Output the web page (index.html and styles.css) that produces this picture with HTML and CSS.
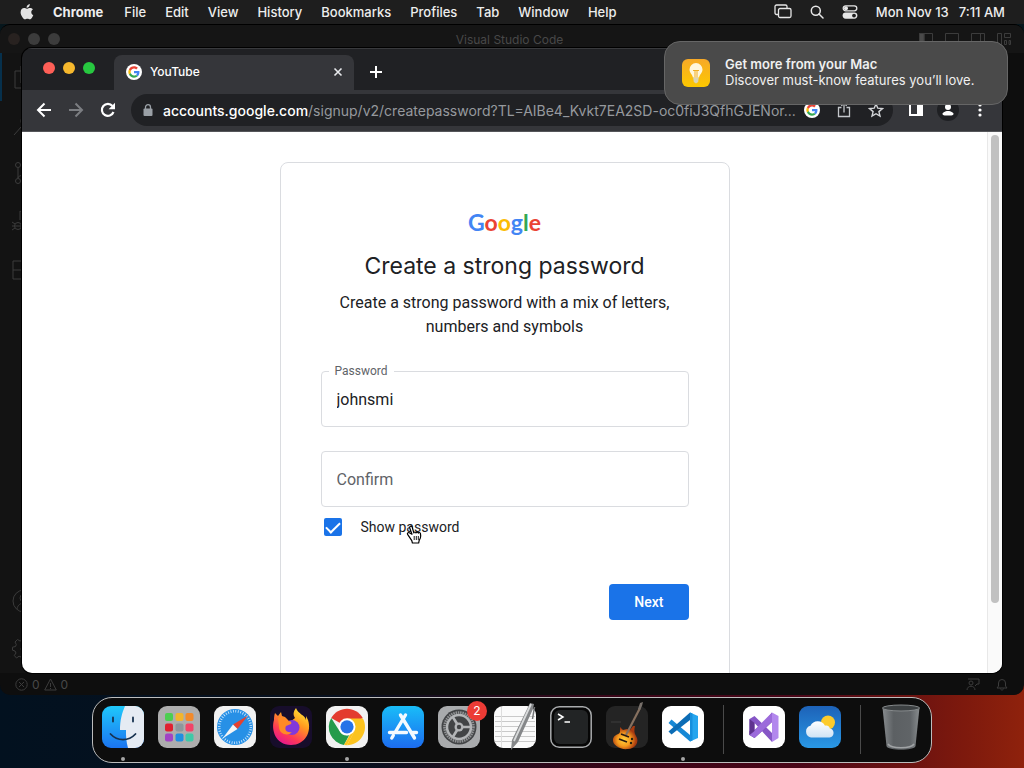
FILE: index.html
```html
<!DOCTYPE html>
<html lang="en">
<head>
    <meta charset="UTF-8">
    <meta name="viewport" content="width=device-width, initial-scale=1.0">
    <title>Create a strong password</title>
    <link rel="stylesheet" href="styles.css">
</head>
<body>
    <!-- Shared icons -->
    <svg class="sprite" width="0" height="0" aria-hidden="true">
        <symbol id="google-g" viewBox="0 0 48 48">
            <circle cx="24" cy="24" r="24" fill="#fff"/>
            <g transform="translate(7 7) scale(.71)">
                <path fill="#EA4335" d="M24 9.5c3.54 0 6.71 1.22 9.21 3.6l6.85-6.85C35.9 2.38 30.47 0 24 0 14.62 0 6.51 5.38 2.56 13.22l7.98 6.19C12.43 13.72 17.74 9.5 24 9.5z"/>
                <path fill="#4285F4" d="M46.98 24.55c0-1.57-.15-3.09-.38-4.55H24v9.02h12.94c-.58 2.96-2.26 5.48-4.78 7.18l7.73 6c4.51-4.18 7.09-10.36 7.09-17.65z"/>
                <path fill="#FBBC05" d="M10.53 28.59c-.48-1.45-.76-2.99-.76-4.59s.27-3.14.76-4.59l-7.98-6.19C.92 16.46 0 20.12 0 24c0 3.88.92 7.54 2.56 10.78l7.97-6.19z"/>
                <path fill="#34A853" d="M24 48c6.48 0 11.93-2.13 15.89-5.81l-7.73-6c-2.15 1.45-4.92 2.3-8.16 2.3-6.26 0-11.57-4.22-13.47-9.91l-7.98 6.19C6.51 42.62 14.62 48 24 48z"/>
            </g>
        </symbol>
    </svg>

    <div class="desktop">
        <header class="menubar">
            <svg class="apple" width="14" height="16" viewBox="0 0 14 16"><path d="M9.8 0c.1 1.100-.3 2-.9 2.700-.6.7-1.400 1.200-2.300 1.100-.1-1 .4-1.900.9-2.500C8.100.6 9 .1 9.800 0zM12.900 5.400c-1.100.7-1.700 1.600-1.600 2.800 0 1.400.8 2.400 2 2.900-.3.9-.7 1.700-1.200 2.400-.7 1-1.300 1.800-2.300 1.800-.9 0-1.300-.6-2.400-.6s-1.500.6-2.400.6c-1 0-1.700-.9-2.400-1.900C1.200 11.500.6 9.900.6 8.300c0-2.700 1.700-4.200 3.500-4.200 1.100 0 1.900.7 2.700.7.700 0 1.700-.8 3-.8 1.200 0 2.400.5 3.100 1.400z"/></svg>
            <nav class="menus">
                <button class="menu app-name">Chrome</button>
                <button class="menu">File</button>
                <button class="menu">Edit</button>
                <button class="menu">View</button>
                <button class="menu">History</button>
                <button class="menu">Bookmarks</button>
                <button class="menu">Profiles</button>
                <button class="menu">Tab</button>
                <button class="menu">Window</button>
                <button class="menu">Help</button>
            </nav>
            <div class="menu-extras">
                <svg width="18" height="15" viewBox="0 0 18 15" fill="none" stroke="#e6e6e6" stroke-width="1.300"><path d="M4 10.500H2.500A1.500 1.500 0 0 1 1 9V2.500A1.500 1.500 0 0 1 2.500 1h9A1.500 1.500 0 0 1 13 2.500V4"/><rect x="4.500" y="4.500" width="12.500" height="9" rx="1.500"/></svg>
                <svg width="14" height="14" viewBox="0 0 14 14" fill="none" stroke="#e6e6e6" stroke-width="1.500"><circle cx="5.800" cy="5.800" r="4.500"/><path d="M9 9l4 4" stroke-linecap="round"/></svg>
                <svg width="16" height="14" viewBox="0 0 16 14"><rect x="1.200" y=".8" width="13.600" height="5" rx="2.500" fill="none" stroke="#e6e6e6" stroke-width="1.300"/><circle cx="4" cy="3.300" r="2" fill="#e6e6e6"/><rect x=".6" y="7.500" width="14.800" height="6.200" rx="3.100" fill="#e6e6e6"/><circle cx="12" cy="10.600" r="1.900" fill="#1e1e1e"/></svg>
                <span class="clock"><span>Mon Nov 13</span><span>7:11 AM</span></span>
            </div>
        </header>

        <!-- Visual Studio Code, in the background -->
        <section class="code-window">
            <div class="code-titlebar">
                <div class="code-lights"><i></i><i></i><i></i></div>
                <span>Visual Studio Code</span>
                <div class="code-layout">
                    <svg width="14" height="12" viewBox="0 0 14 12"><path d="M.5.5h13v11H.5zM5 .5v11"/><path fill="#4a4a4a" d="M.5.5H5v11H.5z"/></svg>
                    <svg width="14" height="12" viewBox="0 0 14 12"><path d="M.5.5h13v11H.5zM.5 8.500h13"/></svg>
                    <svg width="14" height="12" viewBox="0 0 14 12"><path d="M.5.5h13v11H.5zM9.500.5v11"/></svg>
                    <svg width="14" height="12" viewBox="0 0 14 12"><path d="M.5.5h4v11h-4zM7.500.5h6v4h-6zM7.500 7.500h2v4h-2zM12 7.500h1.500v4H12z"/></svg>
                </div>
            </div>
            <div class="activity-bar">
                <span class="active"><svg width="24" height="24" viewBox="0 0 24 24"><path d="M8 6V1h9l5 5v12H8V6H2v17h14v-5"/></svg></span>
                <span><svg width="24" height="24" viewBox="0 0 24 24"><circle cx="15" cy="8" r="6"/><path d="M10 13l-8 9"/></svg></span>
                <span><svg width="24" height="24" viewBox="0 0 24 24"><circle cx="6" cy="4" r="2.500"/><circle cx="6" cy="20" r="2.500"/><circle cx="18" cy="8" r="2.500"/><path d="M6 7v10M18 11c0 4-12 2-12 6"/></svg></span>
                <span><svg width="24" height="24" viewBox="0 0 24 24"><circle cx="6" cy="17" r="3.500"/><path d="M0 13l3 2M0 17h2.500M0 21l3-2M12 13l-3 2M12 21l-3-2M3 17h6M8 2l12 8-7 5M8 2v9"/></svg></span>
                <span><svg width="24" height="24" viewBox="0 0 24 24"><path d="M1 4h9v9h9v9H1zM1 13h9v9M14 2h8v8h-8z"/></svg></span>
                <span class="push"><svg width="24" height="24" viewBox="0 0 24 24"><circle cx="12" cy="12" r="11"/><circle cx="12" cy="9" r="4"/><path d="M5 20c1-8 13-8 14 0"/></svg></span>
                <span><svg width="24" height="24" viewBox="0 0 24 24"><circle cx="12" cy="12" r="3"/><path d="M10 1h4l.5 3 2.500 1 2.500-1.500 2 2.500L20 9l.8 2 2.200 1v2l-3 1-1 2 1.500 3-2.500 1.500-2.500-1.500-2 1-.5 2h-3l-.8-3-2.200-.8L4.500 21 2.300 18.500 4 16l-1-2-2.500-.8v-3L3.500 9.500l.8-2L3 5l2.500-2.500L8 4l1.500-.5z"/></svg></span>
            </div>
            <div class="status-bar">
                <svg width="13" height="13" viewBox="0 0 13 13"><circle cx="6.500" cy="6.500" r="5.700"/><path d="M4 4l5 5M9 4L4 9"/></svg>
                <span>0</span>
                <svg width="13" height="13" viewBox="0 0 13 13"><path d="M6.500 1L12.300 12H.7zM6.500 5v4M6.500 10v1"/></svg>
                <span>0</span>
                <svg class="push-right" width="14" height="13" viewBox="0 0 14 13"><circle cx="5" cy="5" r="2"/><path d="M1 12c0-5 8-5 8 0M2 1h11v5h-2L9 8"/></svg>
                <svg width="12" height="13" viewBox="0 0 12 13"><path d="M1 10h10L9.500 8V5a3.500 3.500 0 0 0-7 0v3zM4.500 10.500c0 2 3 2 3 0"/></svg>
            </div>
        </section>

        <!-- Chrome window -->
        <section class="browser">
            <div class="tab-strip">
                <div class="lights"><i class="red"></i><i class="yellow"></i><i class="green"></i></div>
                <div class="tab">
                    <svg width="16" height="16"><use href="#google-g"/></svg>
                    <span class="tab-title">YouTube</span>
                    <button class="icon-plain" aria-label="Close tab"><svg width="10" height="10" viewBox="0 0 10 10" stroke="#e8eaed" stroke-width="1.600"><path d="M1.500 1.500l7 7M8.500 1.500l-7 7"/></svg></button>
                </div>
                <button class="icon-plain new-tab" aria-label="New tab"><svg width="12" height="12" viewBox="0 0 12 12" stroke="#fff" stroke-width="2"><path d="M6 0v12M0 6h12"/></svg></button>
            </div>
            <div class="toolbar">
                <button class="tool" aria-label="Back"><svg width="16" height="16" viewBox="0 0 16 16" fill="none" stroke="#fff" stroke-width="2"><path d="M15 8H2M8.500 1.500L2 8l6.500 6.500"/></svg></button>
                <button class="tool" aria-label="Forward"><svg width="16" height="16" viewBox="0 0 16 16" fill="none" stroke="#7c7e82" stroke-width="2"><path d="M1 8h13M7.500 1.500L14 8l-6.500 6.500"/></svg></button>
                <button class="tool" aria-label="Reload"><svg width="16" height="16" viewBox="0 0 16 16"><path d="M13.500 10A6 6 0 1 1 12.500 4" fill="none" stroke="#fff" stroke-width="2.200"/><path d="M15 .8v6.400H8.600z" fill="#fff"/></svg></button>
                <div class="omnibox">
                    <svg class="lock" width="10" height="13" viewBox="0 0 10 13"><rect x=".5" y="4.500" width="9" height="7.500" rx="1" fill="#9aa0a6"/><path d="M2.500 5V3.200a2.500 2.500 0 0 1 5 0V5" fill="none" stroke="#9aa0a6" stroke-width="1.300"/></svg>
                    <div class="url" role="textbox" aria-label="Address" contenteditable="true" spellcheck="false"><b>accounts.google.com</b>/signup/v2/createpassword?TL=AIBe4_Kvkt7EA2SD-oc0fiJ3QfhGJENor...</div>
                    <button class="tool" aria-label="Search with Google"><svg width="16" height="16"><use href="#google-g"/></svg></button>
                    <button class="tool" aria-label="Share"><svg width="14" height="16" viewBox="0 0 14 16" fill="none" stroke="#c4c7cb" stroke-width="1.300"><path d="M4.500 5.500h-3v9h11v-9h-3M7 10.500v-9M4.300 3.800L7 1.200l2.700 2.600"/></svg></button>
                    <button class="tool" aria-label="Bookmark"><svg width="16" height="16" viewBox="0 0 16 16" fill="none" stroke="#d5d7da" stroke-width="1.400"><path d="M8 2l1.800 4.200 4.600.4-3.500 3 1.100 4.500L8 11.700l-4 2.400 1.100-4.500-3.500-3 4.600-.4z"/></svg></button>
                </div>
                <button class="tool" aria-label="Side panel"><svg width="14" height="14" viewBox="0 0 14 14"><path fill="#fff" fill-rule="evenodd" d="M0 0h14v13H0zM2 2v9h6V2z"/></svg></button>
                <button class="tool profile" aria-label="Profile"><svg width="14" height="14" viewBox="0 0 14 14" fill="#fff"><circle cx="7" cy="4" r="3"/><path d="M1 12.500c0-6 12-6 12 0z"/></svg></button>
                <button class="tool" aria-label="Menu"><svg width="4" height="16" viewBox="0 0 4 16" fill="#fff"><circle cx="2" cy="3" r="1.600"/><circle cx="2" cy="8" r="1.600"/><circle cx="2" cy="13" r="1.600"/></svg></button>
            </div>
            <div class="viewport">
                <main class="page">
                    <form class="card">
                        <div class="google-logo" aria-label="Google"><span class="b">G</span><span class="r">o</span><span class="y">o</span><span class="b">g</span><span class="g">l</span><span class="r">e</span></div>
                        <h1>Create a strong password</h1>
                        <p class="lead">Create a strong password with a mix of letters, numbers and symbols</p>
                        <div class="field filled">
                            <input type="text" id="password" value="johnsmi">
                            <label for="password">Password</label>
                        </div>
                        <div class="field">
                            <input type="text" id="confirm" placeholder="Confirm" aria-label="Confirm">
                        </div>
                        <div class="show-row">
                            <input type="checkbox" id="show" checked>
                            <label for="show">Show password
                                <svg class="pointer" width="16" height="19" viewBox="0 0 16 19"><path d="M5 1.200c-1 0-1.600.9-1.200 2L6 9.300 3.300 7.700c-1.200-.6-2.400.6-1.700 1.700l4.200 6.200.6 2.400h6.300l.4-2.400c1.500-2 1.700-3 1.600-4.700l-.3-2.500c-.2-1.100-1.800-1.200-2-.2-.2-1.400-2.200-1.500-2.400-.2-.3-1.300-2-1.300-2.200-.1L6.200 2.200C6 1.500 5.600 1.200 5 1.200z" fill="#fff" stroke="#000" stroke-width="1.200" stroke-linejoin="round"/><path d="M8.200 11v4M10.300 11v4M12.300 11v4" stroke="#000" stroke-width=".9"/></svg>
                            </label>
                        </div>
                        <div class="actions"><button type="button" class="next">Next</button></div>
                    </form>
                </main>
                <div class="scrollbar"><div class="thumb"></div></div>
            </div>
        </section>

        <!-- Notification -->
        <aside class="notification">
            <svg width="28" height="28" viewBox="0 0 28 28">
                <defs><linearGradient id="tip" x2="0" y2="1"><stop stop-color="#f7a928"/><stop offset="1" stop-color="#fcc800"/></linearGradient></defs>
                <rect width="28" height="28" rx="6" fill="url(#tip)"/>
                <path d="M14 4a6.500 6.500 0 0 0-6.500 6.500c0 3.600 3 4.800 3.400 8h6.200c.4-3.200 3.400-4.400 3.400-8A6.500 6.500 0 0 0 14 4z" fill="#fff6dc"/>
                <path d="M11 11.500h6M13 12v6M15 12v6" stroke="#f2ae24" fill="none"/>
                <path d="M11.200 18.500h5.600l-.6 4.500-2.200 1.500-2.200-1.500z" fill="#d9d4b8"/>
            </svg>
            <div class="notification-text">
                <strong>Get more from your Mac</strong>
                <span>Discover must-know features you’ll love.</span>
            </div>
        </aside>

        <footer class="dock">
            <!-- Finder -->
            <div class="app running">
                <svg viewBox="0 0 42 42">
                    <defs><linearGradient id="finder" x2="0" y2="1"><stop stop-color="#1fc8fb"/><stop offset="1" stop-color="#1b74f0"/></linearGradient><clipPath id="tile"><rect width="42" height="42" rx="9"/></clipPath></defs>
                    <g clip-path="url(#tile)"><rect width="42" height="42" fill="url(#finder)"/><path d="M23 0c-3 7-5 14-5 24h6c-.2 6 .3 12 2 18h16V0z" fill="#e5ebf3"/></g>
                    <path d="M11 11.500v4M31 11.500v4" stroke="#17324f" stroke-width="1.800" stroke-linecap="round"/><path d="M8.500 28c7 7.500 18 7.500 25 0" fill="none" stroke="#17324f" stroke-width="1.800" stroke-linecap="round"/>
                </svg>
            </div>
            <!-- Launchpad -->
            <div class="app">
                <svg viewBox="0 0 42 42"><rect width="42" height="42" rx="9" fill="#adadad"/>
                    <rect x="7" y="7" width="8" height="8" rx="2" fill="#4cce50"/><rect x="17.500" y="7" width="8" height="8" rx="2" fill="#f3b52d"/><rect x="27.500" y="7" width="8" height="8" rx="2" fill="#f28a2b"/>
                    <rect x="7" y="17.500" width="8" height="8" rx="2" fill="#e0202f"/><rect x="17.500" y="17.500" width="8" height="8" rx="2" fill="#8e969c"/><rect x="27.500" y="17.500" width="8" height="8" rx="2" fill="#f24468"/>
                    <rect x="7" y="27.500" width="8" height="8" rx="2" fill="#a143c4"/><rect x="17.500" y="27.500" width="8" height="8" rx="2" fill="#1f8fe0"/><rect x="27.500" y="27.500" width="8" height="8" rx="2" fill="#3fc9a7"/>
                </svg>
            </div>
            <!-- Safari -->
            <div class="app">
                <svg viewBox="0 0 42 42"><rect width="42" height="42" rx="9" fill="#f1f1f1"/><circle cx="21" cy="21" r="18" fill="#2790e6"/><circle cx="21" cy="21" r="15.800" fill="none" stroke="#d6ecff" stroke-width="2.600" stroke-dasharray=".8 1.680"/>
                    <path d="M34 9.500L19 18.500l4.500 4.500z" fill="#e5402f"/><path d="M19 18.500L8.500 32.500l15-9.500z" fill="#f5f5f5"/></svg>
            </div>
            <!-- Firefox -->
            <div class="app">
                <svg viewBox="0 0 42 42">
                    <defs><linearGradient id="fox" x1=".9" y1="0" x2=".3" y2="1"><stop stop-color="#fff03a"/><stop offset=".4" stop-color="#ff9a1f"/><stop offset=".75" stop-color="#ff3a55"/><stop offset="1" stop-color="#e5178f"/></linearGradient></defs>
                    <rect width="42" height="42" rx="9" fill="#170d2b"/>
                    <path d="M26 2c-3 4-3 7-1 10l-5 4-5-5-3-1-1-4-3 4-3-3c-1 3-1 5-1 7-3 9 1 25 17 25 14 0 21-13 17-25l-2-4v4C35 9 28 8 26 2z" fill="url(#fox)"/>
                    <circle cx="22" cy="21.500" r="7.500" fill="#8238dc"/>
                    <path d="M8 12c4-2 8-1 10 3 3 0 4 1 3 3l-5 2c-2 4 1 7 6 6-4 5-13 2-13-5z" fill="#ff8a26"/>
                </svg>
            </div>
            <!-- Chrome -->
            <div class="app running">
                <svg viewBox="0 0 42 42"><rect width="42" height="42" rx="9" fill="#f1f1f1"/>
                    <path d="M21 21L5.240 11.900A18.200 18.200 0 0 1 36.760 11.900z" fill="#e33b2e"/><path d="M21 12.500h15.900A18.200 18.200 0 0 1 21 39.200L28.400 25.200z" fill="#fcc31e"/><path d="M5.240 11.900l8.400 13.300a8.500 8.500 0 0 0 9.500 4L18 39A18.200 18.200 0 0 1 5.240 11.900z" fill="#249b4a"/><path d="M18 39l8-14 3-.5-8 14.700z" fill="#fcc31e"/>
                    <circle cx="21" cy="20.800" r="8.500" fill="#fff"/><circle cx="21" cy="20.800" r="6.600" fill="#2773e8"/></svg>
            </div>
            <!-- App Store -->
            <div class="app">
                <svg viewBox="0 0 42 42"><defs><linearGradient id="store" x2="0" y2="1"><stop stop-color="#19bdf8"/><stop offset="1" stop-color="#1c6cf0"/></linearGradient></defs><rect width="42" height="42" rx="9" fill="url(#store)"/>
                    <path d="M23.500 9L13 26.500M18.500 9L32.500 32M7.500 26.500h17M29.500 26.500h5M11.300 29.500L9.800 32" stroke="#f4faff" stroke-width="3.400" stroke-linecap="round"/></svg>
            </div>
            <!-- Settings -->
            <div class="app">
                <svg viewBox="0 0 42 42"><rect width="42" height="42" rx="9" fill="#a9abad"/><circle cx="21" cy="21" r="17.500" fill="#424446"/><circle cx="21" cy="21" r="14.500" fill="none" stroke="#929496" stroke-width="2.600" stroke-dasharray="1.500 .8"/><circle cx="21" cy="21" r="12" fill="none" stroke="#b3b5b7" stroke-width="2.500"/>
                    <path d="M21 21L14.500 10.500M21 21h12M21 21l-6.500 10.500" stroke="#b3b5b7" stroke-width="2.600"/><circle cx="21" cy="21" r="4.500" fill="#b3b5b7"/><circle cx="21" cy="21" r="2.200" fill="#424446"/></svg>
                <span class="badge">2</span>
            </div>
            <!-- TextEdit -->
            <div class="app">
                <svg viewBox="0 0 42 42"><rect width="42" height="42" rx="9" fill="#fafafa"/><path d="M1 10.500h40M1 15.500h40M1 20.500h40M1 25.500h40M1 30.500h40M1 35.500h40" stroke="#c9c9c9"/><path d="M7.500 1v40" stroke="#ddd"/>
                    <path d="M36-3l4 1-1 5-15 33-7 8 1-10z" fill="#858789"/><path d="M37-2L20 35" stroke="#d9dbdc" stroke-width="1.800"/><path d="M40.500 1l-2 12" stroke="#737577" stroke-width="1.500"/></svg>
            </div>
            <!-- Terminal -->
            <div class="app">
                <svg viewBox="0 0 42 42"><rect x=".8" y=".8" width="40.400" height="40.400" rx="8.500" fill="#060606" stroke="#a9abad" stroke-width="1.500"/><rect x="4" y="4" width="34" height="34" rx="6" fill="#222425"/><path d="M8 8l5 3-5 3M14.500 16H20" fill="none" stroke="#fff" stroke-width="1.500"/></svg>
            </div>
            <!-- GarageBand -->
            <div class="app">
                <svg viewBox="0 0 42 42"><defs><radialGradient id="guitar" cx=".45" cy=".6"><stop stop-color="#ffd23c"/><stop offset=".55" stop-color="#f59a1e"/><stop offset="1" stop-color="#a83a10"/></radialGradient></defs><rect width="42" height="42" rx="9" fill="#242424"/><path d="M5 16h10" stroke="#3c3c3c"/>
                    <path d="M14 21l3 3 4-1 3 1 3-4 2 0c-1 4-1 7 1 10 4 6-1 13-8 13-8 1-16-4-15-10 1-5 6-4 7-7z" fill="url(#guitar)"/>
                    <path d="M20 29L34 2" stroke="#86705f" stroke-width="2.200"/><path d="M32 3l2-6 3-1-1 4-2 4z" fill="#77706a"/><path d="M15 28l8 3M13 33l8 3" stroke="#2a1a12" stroke-width="1.800"/><circle cx="26" cy="33" r="1.200" fill="#221"/><circle cx="25" cy="37" r="1.200" fill="#221"/></svg>
            </div>
            <!-- Visual Studio Code -->
            <div class="app running">
                <svg viewBox="0 0 42 42"><rect width="42" height="42" rx="9" fill="#fff"/><path d="M28 6.500l8 3.500v22l-8 3.500z" fill="#25a5ee"/><path d="M9.500 13.500L28 29v6.500L6.500 17z" fill="#1688d5"/><path d="M28 6.500V14L9.500 28.500 6.500 25.500z" fill="#0b6cb5"/><path d="M28 6.500l2.500 1v27L28 35.500z" fill="#168fdd"/></svg>
            </div>
            <div class="divider"></div>
            <!-- Visual Studio -->
            <div class="app">
                <svg viewBox="0 0 42 42"><rect width="42" height="42" rx="9" fill="#fff"/><path d="M6.500 13l5-3 17.500 17v9L11.500 17v8l-5 4z" fill="#8656c6"/><path d="M6.500 29v-4l5-1 9-7L29 6.500V16L11.500 32z" fill="#613293"/><path d="M29 6.500l6.500 3.500v22L29 36z" fill="#b287ed"/><path d="M29 6.500V16L15 29l-3.500 3-5-3z" fill="#9c6bdb"/><path d="M6.500 13v16l5-4v-8z" fill="#5f328f"/></svg>
            </div>
            <!-- Weather -->
            <div class="app">
                <svg viewBox="0 0 42 42"><defs><linearGradient id="sky" x2="0" y2="1"><stop stop-color="#1d62b8"/><stop offset="1" stop-color="#2998e5"/></linearGradient><linearGradient id="cloud" x2="0" y2="1"><stop stop-color="#fff"/><stop offset="1" stop-color="#cfe3f5"/></linearGradient></defs><rect width="42" height="42" rx="9" fill="url(#sky)"/><circle cx="29" cy="16.500" r="7" fill="#fccb2c"/><path d="M12 31.500a6 6 0 0 1-.5-11.700 8 8 0 0 1 14.500 0c2-.8 4.500.5 4.800 2.700 5 .4 5.200 8.500-.3 9z" fill="url(#cloud)"/></svg>
            </div>
            <div class="divider"></div>
            <!-- Trash -->
            <div class="app">
                <svg viewBox="0 0 42 42"><defs><linearGradient id="bin"><stop stop-color="#878b8e"/><stop offset=".3" stop-color="#5c6063"/><stop offset=".75" stop-color="#606467"/><stop offset="1" stop-color="#888c8e"/></linearGradient></defs><path d="M2.500 1.500h37L35.500 40c-1 5-28 5-29 0z" fill="url(#bin)"/><ellipse cx="21" cy="2" rx="18.500" ry="3" fill="#3c4042" stroke="#868a8c"/><path d="M8 38c3 5 23 5 26 0" fill="none" stroke="#a0a3a5" stroke-width="1.500"/></svg>
            </div>
        </footer>
    </div>
</body>
</html>
```

FILE: styles.css
```css
* {
    box-sizing: border-box;
}
body {
    margin: 0;
    font-family: Inter, "Liberation Sans", sans-serif;
    font-size: 13px;
}
button {
    padding: 0;
    border: 0;
    background: none;
    color: inherit;
    font: inherit;
}
svg {
    display: block;
    flex: none;
}
.sprite {
    position: absolute;
}

/* Desktop */
.desktop {
    position: relative;
    display: flex;
    flex-direction: column;
    min-height: 100vh;
    overflow: hidden;
    background:
        linear-gradient(#06161c 50%, transparent 85%),
        linear-gradient(90deg, #02111f 0%, #08101f 35%, #3a0518 60%, #4a0618 78%, #7d190d 94%, #8f220c 100%);
}

/* Menu bar */
.menubar {
    display: flex;
    align-items: center;
    height: 24px;
    padding: 0 19px 1px 20px;
    background: #1e1e1e;
    color: #ededed;
    font-weight: 500;
}
.apple {
    fill: #e3e3e3;
}
.menus {
    display: flex;
    gap: 19px;
    margin-left: 19px;
}
.app-name {
    margin-right: 2px;
    font-weight: 700;
}
.menu-extras {
    display: flex;
    align-items: center;
    gap: 18px;
    margin-left: auto;
}
.clock {
    display: flex;
    gap: 10px;
}

/* Code window */
.code-window {
    position: absolute;
    top: 24px;
    right: 0;
    bottom: 73px;
    left: 0;
    display: flex;
    flex-direction: column;
    overflow: hidden;
    border-top: 1px solid #000;
    border-radius: 10px;
    background: #0e0e0e;
    color: #484848;
    font-size: 12px;
}
.code-window svg {
    fill: none;
    stroke: #3c3c3c;
}
.code-titlebar {
    display: grid;
    grid-template-columns: 1fr auto 1fr;
    align-items: center;
    height: 28px;
    padding: 0 13px 0 8px;
    background: #151515;
}
.code-lights, .code-layout {
    display: flex;
    gap: 8px;
}
.code-lights i {
    width: 12px;
    height: 12px;
    border-radius: 50%;
    background: #3c3c3c;
}
.code-lights i:first-child {
    background: #282220;
}
.code-layout {
    gap: 12px;
    justify-self: end;
}
.activity-bar {
    display: flex;
    flex: 1;
    flex-direction: column;
    width: 48px;
    background: #131313;
}
.activity-bar span {
    display: flex;
    align-items: center;
    justify-content: center;
    height: 48px;
}
.activity-bar .active {
    border-left: 2px solid #06304c;
}
.activity-bar .push {
    margin-top: auto;
}
.status-bar {
    display: flex;
    align-items: center;
    gap: 4px;
    height: 22px;
    padding: 0 16px 0 15px;
}
.push-right {
    margin: 0 12px 0 auto;
}

/* Browser window */
.browser {
    position: absolute;
    top: 48px;
    right: 22px;
    bottom: 95px;
    left: 22px;
    display: flex;
    flex-direction: column;
    overflow: hidden;
    border-radius: 10px;
    background: #202124;
    box-shadow: 0 0 0 1px #000;
    color: #fff;
}
.tab-strip {
    display: flex;
    align-items: center;
    height: 42px;
    padding-left: 21px;
    border-top: 1px solid #393a3d;
}
.lights {
    display: flex;
    gap: 8px;
    margin-bottom: 4px;
}
.lights i {
    width: 12px;
    height: 12px;
    border-radius: 50%;
}
.red {
    background: #fe5f57;
}
.yellow {
    background: #f6b82d;
}
.green {
    background: #27c840;
}
.tab {
    display: flex;
    align-items: center;
    align-self: flex-end;
    width: 240px;
    height: 35px;
    margin-left: 19px;
    padding: 0 11px 2px 12px;
    border-radius: 8px 8px 0 0;
    background: #35363a;
    font-size: 12px;
    font-weight: 500;
}
.tab-title {
    flex: 1;
    margin-left: 8px;
}
.new-tab {
    margin: 4px 0 0 16px;
}
.toolbar {
    display: flex;
    align-items: center;
    height: 42px;
    padding: 0 6px 1px;
    border-bottom: 1px solid #55565a;
    background: #35363a;
}
.tool {
    display: flex;
    flex: none;
    align-items: center;
    justify-content: center;
    width: 32px;
    height: 32px;
}
.profile svg {
    box-sizing: content-box;
    padding: 4px;
    border-radius: 50%;
    background: #1f2023;
}
.omnibox {
    display: flex;
    flex: 1;
    align-items: center;
    min-width: 0;
    height: 32px;
    margin: 0 7px;
    padding: 0 1px 0 12px;
    border-radius: 16px;
    background: #202124;
}
.url {
    flex: 1;
    min-width: 0;
    margin-left: 10px;
    overflow: hidden;
    color: #96999e;
    font-size: 14px;
    white-space: nowrap;
}
.url b {
    color: #fff;
    font-weight: 500;
}

/* Sign-up page */
.viewport {
    display: flex;
    flex: 1;
    min-height: 0;
    background: #fff;
}
.page {
    flex: 1;
    padding-top: 30px;
    overflow: hidden;
}
.card {
    max-width: 450px;
    height: 600px;
    margin: 0 auto;
    padding: 43px 40px 0;
    border: 1px solid #dadce0;
    border-radius: 8px;
    color: #202124;
    font-family: Roboto, sans-serif;
    text-align: center;
}
.google-logo {
    font-family: Lato, sans-serif;
    font-size: 23px;
    font-weight: 700;
    line-height: 32px;
}
.b {
    color: #4285f4;
}
.r {
    color: #ea4335;
}
.y {
    color: #fbbc05;
}
.g {
    color: #34a853;
}
h1 {
    margin: 12px 0 0;
    font-family: Inter, sans-serif;
    font-size: 23px;
    font-weight: 400;
    line-height: 32px;
}
.lead {
    margin: 9px 0 32px;
    padding: 0 10px;
    font-size: 16px;
    line-height: 24px;
}
.field {
    position: relative;
    margin-bottom: 24px;
}
.field input {
    width: 100%;
    height: 56px;
    padding: 0 15px;
    border: 1px solid #dadce0;
    border-radius: 4px;
    background: #fff;
    color: #202124;
    font: 16px Roboto, sans-serif;
}
.field input::placeholder {
    color: #5f6368;
    opacity: 1;
}
.field label {
    position: absolute;
    top: -8px;
    left: 8px;
    padding: 0 6px;
    background: #fff;
    color: #5f6368;
    font-size: 12px;
    line-height: 16px;
}
.show-row {
    display: flex;
    align-items: center;
    gap: 19px;
    margin: -13px 0 48px;
    padding-left: 3px;
    font-size: 14px;
    line-height: 18px;
}
.show-row input {
    appearance: none;
    display: flex;
    justify-content: center;
    width: 18px;
    height: 18px;
    margin: 0;
    border-radius: 2px;
    background: #1a73e8;
}
.show-row input:checked::after {
    content: "";
    width: 6px;
    height: 12px;
    margin-top: 1px;
    border: solid #fff;
    border-width: 0 2px 2px 0;
    transform: rotate(45deg);
}
.show-row label {
    position: relative;
}
.pointer {
    position: absolute;
    top: 7px;
    left: 45px;
}
.actions {
    display: flex;
    justify-content: flex-end;
}
.next {
    height: 36px;
    padding: 0 25px;
    border-radius: 4px;
    background: #1a73e8;
    color: #fff;
    font-size: 14px;
    font-weight: 500;
}
.scrollbar {
    width: 15px;
    padding: 3px 3px 0;
    border-left: 1px solid #e8e8e8;
    background: #fafafa;
}
.thumb {
    height: 87%;
    border-radius: 4px;
    background: #c1c1c1;
}

/* Notification */
.notification {
    position: absolute;
    top: 41px;
    right: 16px;
    display: flex;
    align-items: center;
    gap: 15px;
    width: 344px;
    height: 64px;
    padding: 0 17px;
    border: 1px solid #666;
    border-radius: 16px;
    background: #4a4a4a;
    color: #f0f0f0;
    line-height: 16px;
}
.notification-text {
    display: flex;
    flex-direction: column;
    padding-bottom: 2px;
    white-space: nowrap;
}
.notification strong {
    font-weight: 600;
}

/* Dock */
.dock {
    position: relative;
    display: flex;
    gap: 14px;
    align-self: center;
    margin: auto 0 5px;
    padding: 8px 9px 14px;
    border: 1px solid #bdbdbd;
    border-radius: 20px;
    background: #0d0d0d;
}
.app {
    position: relative;
    width: 42px;
    height: 42px;
}
.app svg {
    width: 42px;
    height: 42px;
    overflow: visible;
}
.running::after {
    content: "";
    position: absolute;
    bottom: -13px;
    left: 19px;
    width: 4px;
    height: 4px;
    border-radius: 50%;
    background: #a5a5a5;
}
.badge {
    position: absolute;
    top: -5px;
    right: -7px;
    width: 20px;
    height: 20px;
    border-radius: 50%;
    background: #ec3b35;
    color: #fff;
    font-size: 12px;
    line-height: 20px;
    text-align: center;
}
.divider {
    width: 1px;
    margin: -1px 5px -6px;
    background: #4a4a4a;
}
```
